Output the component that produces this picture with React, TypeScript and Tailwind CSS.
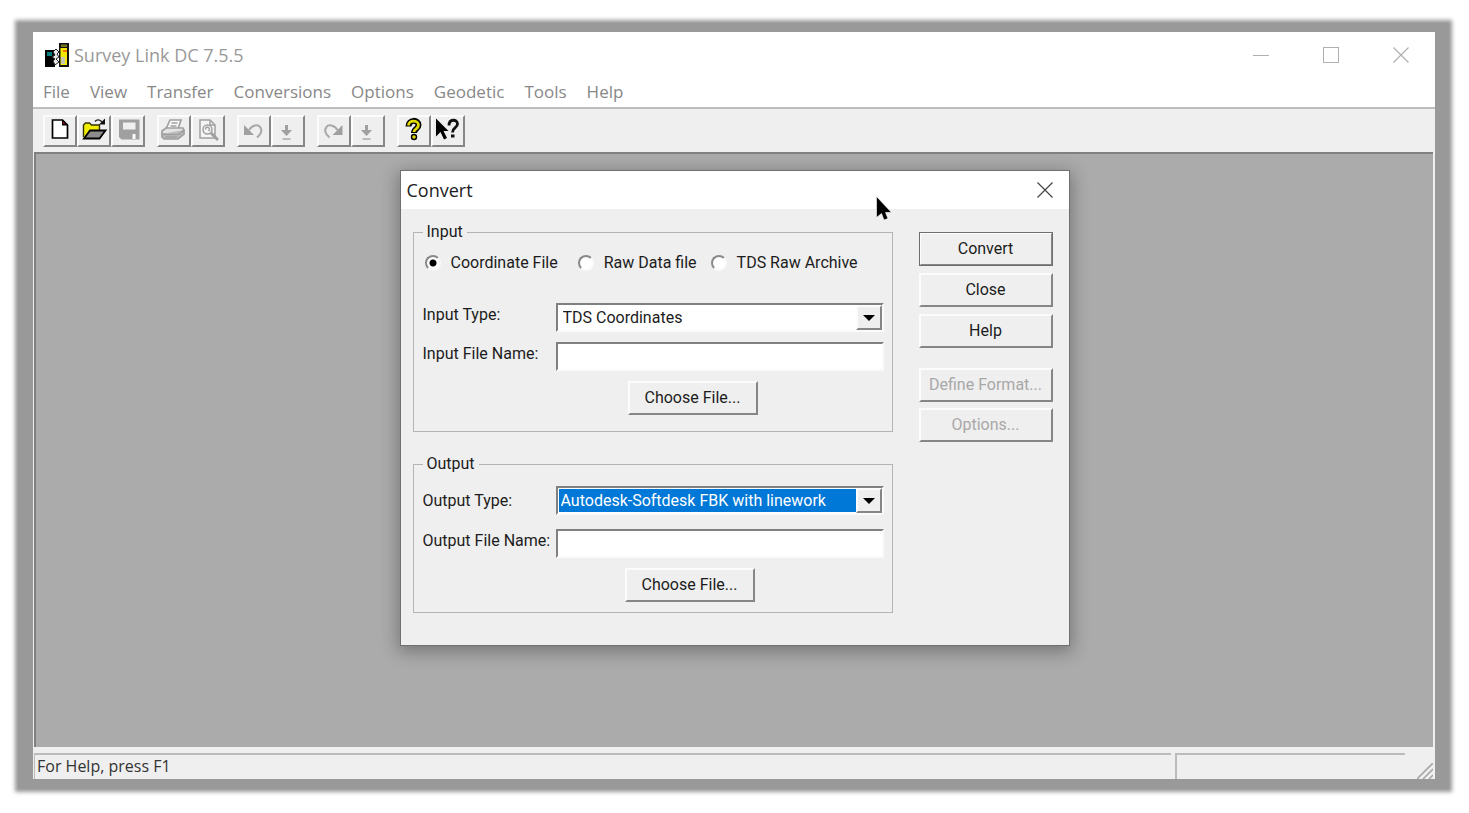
import { useState, ReactNode } from 'react';
import clsx from 'clsx';

const menus = ['File', 'View', 'Transfer', 'Conversions', 'Options', 'Geodetic', 'Tools', 'Help'];

const sources = ['Coordinate File', 'Raw Data file', 'TDS Raw Archive'];

/* Icons */

const Icon = ({ children }: { children: ReactNode }) => (
  <svg viewBox="0 0 30 28" className="w-[30px] h-7" fill="none">
    {children}
  </svg>
);

const NewIcon = () => (
  <Icon>
    <path d="M7.500 3h10l5 5v13h-15z" fill="#fff" stroke="#000" strokeWidth="1.7" />
    <path d="M17 2.500v6h6z" fill="#000" />
    <path d="M18 4.500v2.500h2.500z" fill="#a00010" />
  </Icon>
);

const OpenIcon = () => (
  <Icon>
    <path d="M4.500 20V8l2-2h4l2 2h8v5" fill="#f2ee00" stroke="#333300" strokeWidth="1.4" />
    <path d="M5 21.500l6-8h15.500l-6 8z" fill="#8c8c8c" stroke="#000" strokeWidth="1.8" />
    <path d="M16 4.500c2-2.500 5-2 7 .5" stroke="#222" strokeWidth="1.4" />
    <path d="M26 1.500v6h-6z" fill="#111" />
  </Icon>
);

const SaveIcon = () => (
  <Icon>
    <path d="M6 2.500h20.500v20H8.500L6 20z" fill="#a0a0a0" />
    <path d="M10 5.500h12.500v7H10z" fill="#efefef" />
    <path d="M19.500 17h3v5h-3z" fill="#fafafa" />
  </Icon>
);

const PrintIcon = () => (
  <Icon>
    <g stroke="#a0a0a0" strokeWidth="1.7">
      <path d="M7 12l4-9h11l-3 9" fill="#fafafa" />
      <path d="M12.500 6h6M11.500 9h6" />
      <path d="M3 14l4-3h17l1 2-4 4H3z" fill="#e4e4e4" />
      <path d="M3 17v3l2 2h14l6-5v-4" fill="#bcbcbc" />
      <path d="M4 17.500h16l5-4.500M6 20h12" />
    </g>
  </Icon>
);

const PreviewIcon = () => (
  <Icon>
    <g stroke="#a0a0a0" strokeWidth="1.5">
      <path d="M7 3h10l5 5v13H7z" fill="#f4f4f4" />
      <path d="M17 3v5h5" />
      <circle cx="14.500" cy="12.500" r="4.500" />
      <path d="M12.500 12.500a2 2 0 1 1 3 1.500" />
      <path d="M18 16l7 7" strokeWidth="3" />
    </g>
  </Icon>
);

const UndoIcon = () => (
  <Icon>
    <path d="M5 8v10h10z" fill="#a0a0a0" />
    <path d="M10 13c3-5 9-6 11-3 2.500 3 1 7-3 10.500" stroke="#a8a8a8" strokeWidth="2" />
  </Icon>
);

const RedoIcon = () => (
  <Icon>
    <path d="M23.500 8v10h-10z" fill="#a0a0a0" />
    <path d="M18.500 13c-3-5-9-6-11-3-2.500 3-1 7 3 10.500" stroke="#a8a8a8" strokeWidth="2" />
  </Icon>
);

const DownIcon = () => (
  <Icon>
    <path d="M12 8h3v5h4l-5.500 6L8 13h4z" fill="#a0a0a0" />
    <path d="M9.500 22h8" stroke="#a8a8a8" strokeWidth="1.500" />
  </Icon>
);

const HelpIcon = () => (
  <Icon>
    <path d="M9.500 9.500c0-7.500 10-7 10-1.500 0 4-4.500 3.500-4.500 8" stroke="#000" strokeWidth="6" />
    <circle cx="15" cy="20" r="3.200" fill="#000" />
    <path d="M9.500 8.500c0-6 10-5.500 10-.5 0 4-4.500 3.500-4.500 7" stroke="#e0d800" strokeWidth="2.800" />
    <circle cx="15" cy="20" r="1.800" fill="#e0d800" />
  </Icon>
);

const WhatsThisIcon = () => (
  <Icon>
    <path d="M3 1.500v18l4.500-4.500 3.500 7.500 3-1.500-3.500-7h5z" fill="#000" />
    <path d="M16 8.500c0-7 8.500-6.500 8.500-1.500 0 4-5 3.500-5 8.500" stroke="#111" strokeWidth="2.800" />
    <path d="M18 17.500h3.500v3H18z" fill="#111" />
  </Icon>
);

const AppIcon = () => (
  <svg viewBox="0 0 24 24" className="w-6 h-6">
    <path d="M0 7h10v17H0z" fill="#000" />
    <path d="M2 9h5v4H2z" fill="#007f80" />
    <path d="M14 0h10v24H14z" fill="#111" />
    <path d="M15.500 5H22v17h-6.500z" fill="#f5e900" />
    <path d="M16 1.500h6V4h-6z" fill="#77771a" />
    <path d="M18 7h4v2h-4z" fill="#f07000" />
    <path d="M16 14h4v7h-4z" fill="#c8c8b0" />
    <path d="M8 9l3-3 3 3-2 2 2 3-3 2 3 3-4 3-2-4 2-2-3-2 3-2z" fill="#e8e8e8" stroke="#222" strokeWidth="1" />
  </svg>
);

const CloseIcon = () => (
  <svg viewBox="0 0 16 16" className="w-4 h-4" stroke="currentColor" strokeWidth="1.2">
    <path d="M.5.5l15 15M15.500.5l-15 15" />
  </svg>
);

const toolGroups = [
  [
    { label: 'New', icon: <NewIcon /> },
    { label: 'Open', icon: <OpenIcon /> },
    { label: 'Save', icon: <SaveIcon />, disabled: true },
  ],
  [
    { label: 'Print', icon: <PrintIcon />, disabled: true },
    { label: 'Print Preview', icon: <PreviewIcon />, disabled: true },
  ],
  [
    { label: 'Undo', icon: <UndoIcon />, disabled: true },
    { label: 'Undo list', icon: <DownIcon />, disabled: true },
  ],
  [
    { label: 'Redo', icon: <RedoIcon />, disabled: true },
    { label: 'Redo list', icon: <DownIcon />, disabled: true },
  ],
  [
    { label: 'About', icon: <HelpIcon /> },
    { label: 'Context Help', icon: <WhatsThisIcon /> },
  ],
];

/* Controls */

const raised = 'border-2 border-t-[#fcfcfc] border-l-[#fcfcfc] border-r-[#868686] border-b-[#868686] bg-[#efefef]';
const sunken = 'border-2 border-b-[#fafafa] border-r-[#fafafa] border-t-[#808080] border-l-[#808080] bg-white';

interface ButtonProps {
  children: ReactNode;
  className?: string;
  isDefault?: boolean;
  disabled?: boolean;
}

function Button({ children, className, isDefault, disabled }: ButtonProps) {
  return (
    <button
      type="button"
      disabled={disabled}
      className={clsx(
        'h-[34px] flex items-center justify-center disabled:text-[#a8a8a8]',
        raised,
        isDefault && 'outline-1 -outline-offset-1 outline-[#6e6e6e]',
        className
      )}
    >
      {children}
    </button>
  );
}

interface SelectProps {
  id: string;
  options: string[];
  highlighted?: boolean;
}

function Select({ id, options, highlighted }: SelectProps) {
  return (
    <div className={clsx('relative flex-1 h-[29px] p-px', sunken)}>
      <select
        id={id}
        className={clsx(
          'block w-full h-full appearance-none outline-none',
          highlighted ? 'pl-0.5 bg-[#0078d7] text-white' : 'pl-1 bg-white text-[#1c1c1c]'
        )}
      >
        {options.map((option) => (
          <option key={option}>{option}</option>
        ))}
      </select>
      <span className={clsx('absolute top-0 right-0 bottom-0 w-[26px] flex items-center justify-center pointer-events-none', raised)}>
        <svg viewBox="0 0 12 6" className="w-3 h-1.5">
          <path d="M0 0h12L6 6z" fill="#000" />
        </svg>
      </span>
    </div>
  );
}

interface RowProps {
  id: string;
  label: string;
  className?: string;
  children: ReactNode;
}

const Row = ({ id, label, className, children }: RowProps) => (
  <div className={clsx('flex', className)}>
    <label htmlFor={id} className="w-[133px] leading-6 whitespace-nowrap">
      {label}
    </label>
    {children}
  </div>
);

const Group = ({ title, className, children }: { title: string; className: string; children: ReactNode }) => (
  <fieldset className={clsx('border border-[#b4b4b4] pl-[9px] pr-2', className)}>
    <legend className="px-1 leading-5">{title}</legend>
    {children}
  </fieldset>
);

function ConvertDialog() {
  const [source, setSource] = useState(sources[0]);

  return (
    <div
      role="dialog"
      aria-labelledby="convert-title"
      className="relative w-[670px] max-w-full mx-auto border border-[#707070] bg-[#efefef] font-['Roboto',sans-serif] text-base text-[#1c1c1c] shadow-[0_4px_16px_2px_rgba(0,0,0,0.3)]"
    >
      {/* Caption */}
      <div className="h-[38px] pl-1.5 pr-4 flex items-center justify-between bg-white">
        <h2 id="convert-title" className="font-['Open_Sans',sans-serif] text-lg">
          Convert
        </h2>
        <button type="button" aria-label="Close dialog" className="text-[#444]">
          <CloseIcon />
        </button>
      </div>

      <div className="flex gap-[26px] pt-[13px] pl-3 pr-4 pb-8">
        <div className="flex-1">
          <Group title="Input" className="pb-4">
            <div className="flex items-center h-6 mt-[9px] pl-0.5">
              {sources.map((name) => (
                <label key={name} className="flex items-center gap-2.5 mr-5 last:mr-0 nth-2:mr-3.5 whitespace-nowrap">
                  <input
                    type="radio"
                    name="source"
                    checked={source === name}
                    onChange={() => setSource(name)}
                    className="appearance-none w-4 h-4 rounded-full bg-white border-2 border-t-[#8a8a8a] border-l-[#8a8a8a] border-r-[#fafafa] border-b-[#fafafa] checked:bg-[radial-gradient(circle,#000_3px,#fff_4px)]"
                  />
                  {name}
                </label>
              ))}
            </div>
            <div className="flex flex-col gap-2.5 mt-7">
              <Row id="input-type" label="Input Type:">
                <Select id="input-type" options={['TDS Coordinates']} />
              </Row>
              <Row id="input-file" label="Input File Name:">
                <input id="input-file" type="text" className={clsx('flex-1 h-[29px] px-1 outline-none', sunken)} />
              </Row>
              <Button className="w-[130px] ml-[205px]">Choose File...</Button>
            </div>
          </Group>

          <Group title="Output" className="mt-[22px] pb-2.5">
            <div className="mt-3">
              <Row id="output-type" label="Output Type:" className="items-center">
                <Select id="output-type" options={['Autodesk-Softdesk FBK with linework']} highlighted />
              </Row>
            </div>
            <div className="flex flex-col gap-2.5 mt-3.5">
              <Row id="output-file" label="Output File Name:">
                <input id="output-file" type="text" className={clsx('flex-1 h-[29px] px-1 outline-none', sunken)} />
              </Row>
              <Button className="w-[130px] ml-[202px]">Choose File...</Button>
            </div>
          </Group>
        </div>

        <div className="flex flex-col gap-5 w-[134px] pt-2.5">
          <div className="flex flex-col gap-[7px]">
            <Button isDefault>Convert</Button>
            <Button>Close</Button>
            <Button>Help</Button>
          </div>
          <div className="flex flex-col gap-1.5">
            <Button disabled>Define Format...</Button>
            <Button disabled>Options...</Button>
          </div>
        </div>
      </div>

      {/* Mouse pointer */}
      <svg viewBox="0 0 16 25" className="absolute top-[25px] left-[475px] w-4 h-[25px]">
        <path d="M.5.5v21l5-4 2.500 6.500 4-1.500-2.500-6h6z" fill="#000" stroke="#fff" strokeWidth=".6" />
      </svg>
    </div>
  );
}

export default function App() {
  return (
    <div className="min-h-screen flex flex-col bg-white pt-[23px] pr-5 pb-6 pl-[18px]">
      <div className="flex-1 flex flex-col bg-[#999] pt-[9px] pr-3.5 pb-2.5 pl-[15px] shadow-[0_0_4px_3px_#999]">
        <div className="flex-1 flex flex-col bg-[#efefef] font-['Open_Sans',sans-serif]">
          {/* Title bar */}
          <header className="bg-white text-[#999] border-b-2 border-[#bdbdbd]">
            <div className="flex items-center justify-between pt-[9px] pl-3 pr-[26px]">
              <h1 className="flex items-center gap-[5px] text-lg">
                <AppIcon />
                Survey Link DC 7.5.5
              </h1>
              <div className="flex items-center gap-[54px] text-[#b0b0b0]">
                <button type="button" aria-label="Minimize" className="w-4 h-4 flex items-center">
                  <span className="w-4 border-t border-current" />
                </button>
                <button type="button" aria-label="Maximize" className="w-4 h-4 border border-current" />
                <button type="button" aria-label="Close">
                  <CloseIcon />
                </button>
              </div>
            </div>
            <nav className="flex gap-5 pt-[11px] pb-[3px] pl-2.5 text-[17px] leading-6 text-[#888]">
              {menus.map((menu) => (
                <button key={menu} type="button">
                  {menu}
                </button>
              ))}
            </nav>
          </header>

          {/* Toolbar */}
          <div className="flex gap-3 pt-1.5 pb-[5px] pl-2.5">
            {toolGroups.map((group, index) => (
              <div key={index} className="flex">
                {group.map((tool) => (
                  <button
                    key={tool.label}
                    type="button"
                    aria-label={tool.label}
                    disabled={tool.disabled}
                    className={clsx('w-[34px] h-8', raised)}
                  >
                    {tool.icon}
                  </button>
                ))}
              </div>
            ))}
          </div>

          {/* Workspace */}
          <main className="flex-1 ml-px mr-0.5 pt-4 pb-8 bg-[#ababab] border-t-2 border-l-2 border-[#808080]">
            <ConvertDialog />
          </main>

          {/* Status bar */}
          <footer className="flex items-stretch h-8 pt-1.5 pl-px text-base text-[#333]">
            <div className="flex-1 pl-0.5 leading-[22px] border-t-2 border-l border-[#bbb]">For Help, press F1</div>
            <div className="w-[230px] ml-1 border-t-2 border-l-2 border-[#bbb]" />
            <svg viewBox="0 0 16 16" className="w-4 h-4 ml-3 mr-0.5 self-end" stroke="#a8a8a8" strokeWidth="1.6">
              <path d="M0 16L16 0M6 16L16 6M12 16l4-4" />
            </svg>
          </footer>
        </div>
      </div>
    </div>
  );
}
